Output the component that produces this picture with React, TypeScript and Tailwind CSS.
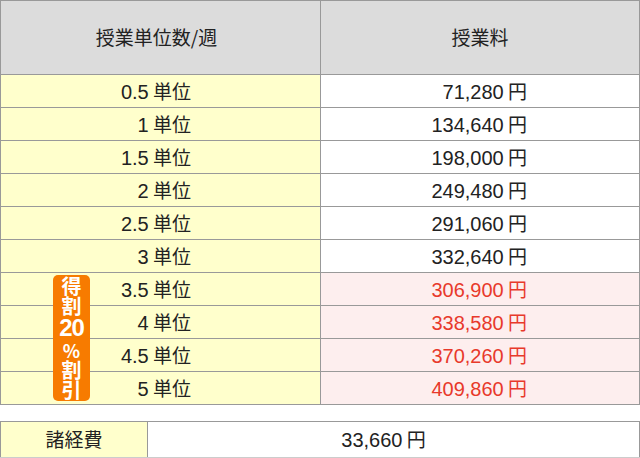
import React from 'react';

type FeeRow = { units: string; price: string; discount?: boolean };

const rows: FeeRow[] = [
  { units: '0.5', price: '71,280' },
  { units: '1', price: '134,640' },
  { units: '1.5', price: '198,000' },
  { units: '2', price: '249,480' },
  { units: '2.5', price: '291,060' },
  { units: '3', price: '332,640' },
  { units: '3.5', price: '306,900', discount: true },
  { units: '4', price: '338,580', discount: true },
  { units: '4.5', price: '370,260', discount: true },
  { units: '5', price: '409,860', discount: true },
];

const font = { fontFamily: '"Noto Sans CJK JP", "Noto Sans", sans-serif' };

const Num: React.FC<{ children: React.ReactNode }> = ({ children }) => (
  <span className="font-['Liberation_Sans',sans-serif] text-[20px]">{children}</span>
);

const App: React.FC = () => {
  return (
    <div className="w-[640px] h-[458px] bg-white text-[#222] overflow-hidden" style={font}>
      <div className="relative">
        <table className="w-[640px] border-collapse table-fixed">
          <thead>
            <tr className="h-[74px] bg-[#dcdcdc]">
              <th className="w-[320px] border border-[#999] font-normal text-[19px] pr-[8px]">授業単位数/週</th>
              <th className="border border-[#999] font-normal text-[19px]">授業料</th>
            </tr>
          </thead>
          <tbody>
            {rows.map((r) => (
              <tr key={r.units} className="h-[33px]">
                <td className="border border-[#999] bg-[#ffffcc] text-right pr-[129px] text-[19px] leading-none">
                  <Num>{r.units}</Num> 単位
                </td>
                <td
                  className={
                    r.discount
                      ? 'border border-[#999] bg-[#fdeeee] text-right pr-[112px] text-[19px] leading-none text-[#e8392b]'
                      : 'border border-[#999] bg-white text-right pr-[112px] text-[19px] leading-none'
                  }
                >
                  <Num>{r.price}</Num> 円
                </td>
              </tr>
            ))}
          </tbody>
        </table>
        <div className="absolute left-[53px] top-[275px] w-[37px] h-[126px] rounded-[5px] bg-[#f77b00] text-white font-bold flex flex-col items-center justify-center leading-[20px]">
          <span className="text-[20px]">得</span>
          <span className="text-[20px]">割</span>
          <span className="text-[24px] leading-[24px] tracking-[-1px] font-['Liberation_Sans',sans-serif]">20</span>
          <span className="text-[18px]">%</span>
          <span className="text-[20px]">割</span>
          <span className="text-[20px]">引</span>
        </div>
      </div>
      <table className="w-[640px] mt-[16px] border-collapse table-fixed">
        <tbody>
          <tr className="h-[36px]">
            <td className="w-[147px] border border-[#999] border-b-[#ccc] bg-[#ffffcc] text-center text-[19px]">諸経費</td>
            <td className="border border-[#999] border-b-[#ccc] text-center text-[19px] pr-[20px]">
              <Num>33,660</Num> 円
            </td>
          </tr>
        </tbody>
      </table>
    </div>
  );
};

export default App;
